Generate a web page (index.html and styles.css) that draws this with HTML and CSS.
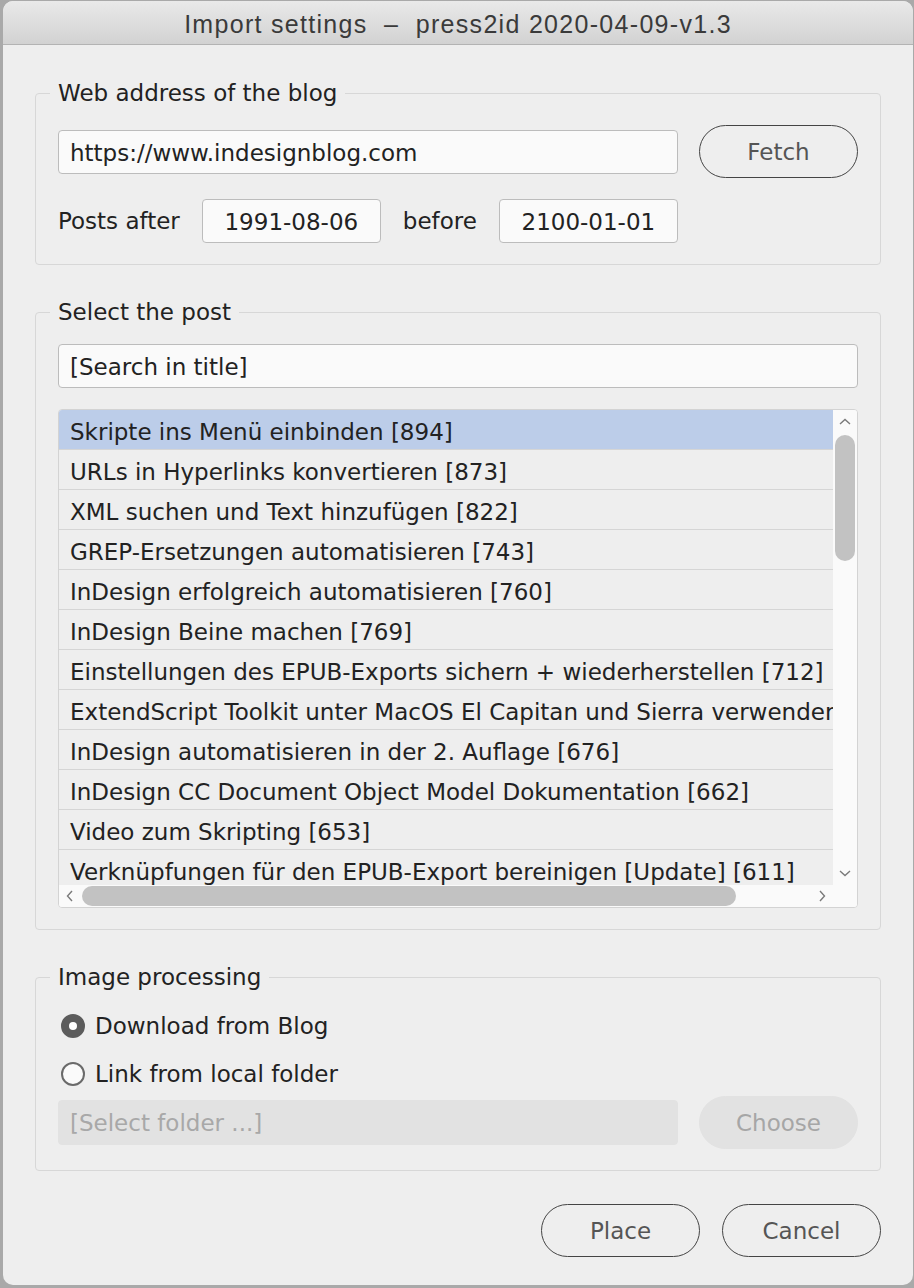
FILE: index.html
```html
<!DOCTYPE html>
<html lang="en">
<head>
<meta charset="utf-8">
<title>Import settings</title>
<link rel="stylesheet" href="styles.css">
</head>
<body>
<div class="window">
  <div class="titlebar">Import settings&nbsp; –&nbsp; press2id 2020-04-09-v1.3</div>
  <div class="content">
    <fieldset class="group">
      <legend>Web address of the blog</legend>
      <div class="row">
        <div class="field grow">https://www.indesignblog.com</div>
        <button class="btn">Fetch</button>
      </div>
      <div class="row dates">
        <span class="label">Posts after</span>
        <div class="field date">1991-08-06</div>
        <span class="label">before</span>
        <div class="field date">2100-01-01</div>
      </div>
    </fieldset>

    <fieldset class="group">
      <legend>Select the post</legend>
      <div class="field">[Search in title]</div>
      <div class="list">
        <div class="rows">
          <div class="item selected">Skripte ins Menü einbinden [894]</div>
          <div class="item">URLs in Hyperlinks konvertieren [873]</div>
          <div class="item">XML suchen und Text hinzufügen [822]</div>
          <div class="item">GREP-Ersetzungen automatisieren [743]</div>
          <div class="item">InDesign erfolgreich automatisieren [760]</div>
          <div class="item">InDesign Beine machen [769]</div>
          <div class="item">Einstellungen des EPUB-Exports sichern + wiederherstellen [712]</div>
          <div class="item">ExtendScript Toolkit unter MacOS El Capitan und Sierra verwenden [701]</div>
          <div class="item">InDesign automatisieren in der 2. Auflage [676]</div>
          <div class="item">InDesign CC Document Object Model Dokumentation [662]</div>
          <div class="item">Video zum Skripting [653]</div>
          <div class="item">Verknüpfungen für den EPUB-Export bereinigen [Update] [611]</div>
        </div>
        <div class="vscroll">
          <svg class="arrow up" width="14" height="10" viewBox="0 0 14 10"><path d="M2 7 L7 2.5 L12 7" fill="none" stroke="#7a7a7a" stroke-width="1.4"/></svg>
          <div class="vthumb"></div>
          <div class="vspace"></div>
          <svg class="arrow down" width="14" height="10" viewBox="0 0 14 10"><path d="M2 3 L7 7.5 L12 3" fill="none" stroke="#7a7a7a" stroke-width="1.4"/></svg>
        </div>
        <div class="hscroll">
          <svg class="harrow left" width="10" height="14" viewBox="0 0 10 14"><path d="M7 2 L2.5 7 L7 12" fill="none" stroke="#7a7a7a" stroke-width="1.4"/></svg>
          <div class="hthumb"></div>
          <div class="hspace"></div>
          <svg class="harrow right" width="10" height="14" viewBox="0 0 10 14"><path d="M3 2 L7.5 7 L3 12" fill="none" stroke="#7a7a7a" stroke-width="1.4"/></svg>
        </div>
        <div class="corner"></div>
      </div>
    </fieldset>

    <fieldset class="group">
      <legend>Image processing</legend>
      <div class="radio first"><span class="dot on"></span>Download from Blog</div>
      <div class="radio"><span class="dot"></span>Link from local folder</div>
      <div class="row folder">
        <div class="field grow disabled">[Select folder ...]</div>
        <button class="btn disabled">Choose</button>
      </div>
    </fieldset>

    <div class="actions">
      <button class="btn">Place</button>
      <button class="btn">Cancel</button>
    </div>
  </div>
</div>
</body>
</html>
```

FILE: styles.css
```css
* { box-sizing: border-box; }

html, body {
  margin: 0;
  background: #a9a9a9;
}

body {
  padding: 1px 1px 3px 3px;
  font-family: "DejaVu Sans", "Noto Sans", sans-serif;
  font-size: 23px;
  color: #222;
}

.window {
  width: 910px;
  height: 1284px;
  background: #eeeeee;
  border-radius: 10px;
  overflow: hidden;
}

.titlebar {
  height: 44px;
  padding-top: 3px;
  background: linear-gradient(#e9e9e9, #d2d2d2);
  border-bottom: 1px solid #b3b3b3;
  text-align: center;
  font-family: "Liberation Sans", Arial, sans-serif;
  font-size: 25px;
  letter-spacing: 1.3px;
  line-height: 40px;
  color: #3a3a3a;
}

.content {
  padding: 34px 32px 0;
}

.group {
  margin: 0 0 33px;
  border: 1px solid #d7d7d7;
  border-radius: 4px;
  padding: 18px 22px 21px;
  min-width: 0;
}

.group legend {
  padding: 0 8px;
  margin-left: -8px;
  line-height: 28px;
  color: #222;
}

.row {
  display: flex;
  align-items: center;
  gap: 21px;
  height: 53px;
}

.row.dates {
  margin-top: 21px;
  height: 44px;
  gap: 22px;
}

.field {
  height: 44px;
  background: #fafafa;
  border: 1px solid #bcbcbc;
  border-radius: 4px;
  padding: 2px 11px 0;
  line-height: 40px;
  white-space: nowrap;
  overflow: hidden;
}

.field.grow { flex: 1; }

.field.date {
  width: 179px;
  text-align: center;
  padding: 2px 0 0;
}

.field.disabled {
  background: #e2e2e2;
  border-color: #e2e2e2;
  color: #a8a8a8;
}

.btn {
  width: 159px;
  height: 53px;
  border: 1.5px solid #444;
  border-radius: 27px;
  background: #eeeeee;
  color: #555;
  font: inherit;
  padding: 0;
}

.btn.disabled {
  background: #e2e2e2;
  border-color: #e2e2e2;
  color: #a6a6a6;
}

.list {
  margin-top: 21px;
  height: 499px;
  border: 1px solid #d3d3d3;
  border-radius: 4px;
  background: #fafafa;
  display: grid;
  grid-template-columns: 1fr 24px;
  grid-template-rows: 1fr 22px;
  overflow: hidden;
}

.rows {
  overflow: hidden;
  background: #eeeeee;
}

.item {
  height: 40px;
  padding: 5px 11px 0;
  line-height: 34px;
  border-bottom: 1px solid #d5d5d5;
  white-space: nowrap;
  overflow: hidden;
  background: #eeeeee;
}

.item.selected {
  background: #bccde9;
}

.vscroll {
  display: flex;
  flex-direction: column;
  align-items: center;
  padding: 7px 0 0;
  background: #fafafa;
}

.vscroll .up { margin-bottom: 8px; }

.vthumb {
  width: 20px;
  height: 126px;
  border-radius: 10px;
  background: #c2c2c2;
}

.vspace { flex: 1; }

.vscroll .down { margin-bottom: 7px; }

.hscroll {
  display: flex;
  align-items: center;
  padding-left: 6px;
  background: #fafafa;
}

.hthumb {
  margin-left: 7px;
  width: 654px;
  height: 20px;
  border-radius: 10px;
  background: #c2c2c2;
}

.hspace { flex: 1; }

.hscroll .right { margin-right: 6px; }

.corner { background: #fafafa; }

.radio {
  display: flex;
  align-items: center;
  height: 28px;
  margin-top: 20px;
}

.radio.first { margin-top: 3px; }

.dot {
  width: 24px;
  height: 24px;
  margin: 0 10px 0 3px;
  border: 2px solid #6a6a6a;
  border-radius: 50%;
  background: #fafafa;
  display: flex;
  align-items: center;
  justify-content: center;
}

.dot.on {
  background: #5c5c5c;
  border-color: #5c5c5c;
}

.dot.on::after {
  content: "";
  width: 8px;
  height: 8px;
  border-radius: 50%;
  background: #fff;
}

.row.folder {
  margin-top: 8px;
}

.row.folder .field {
  height: 45px;
}

.actions {
  display: flex;
  justify-content: flex-end;
  gap: 22px;
}
```
